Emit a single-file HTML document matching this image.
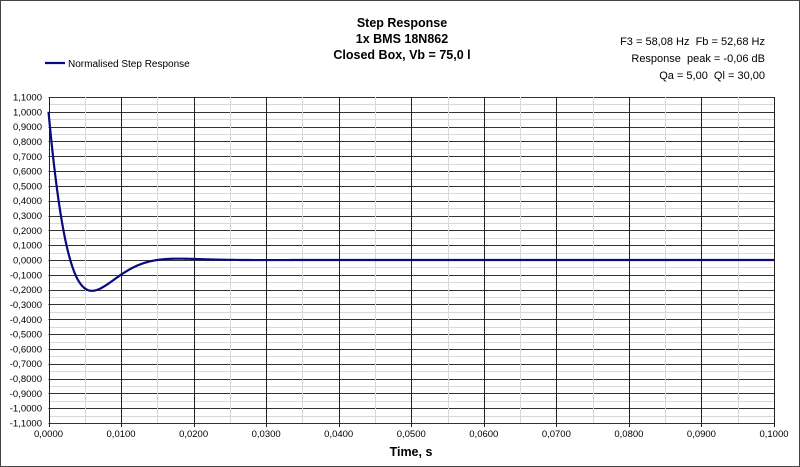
<!DOCTYPE html>
<html><head><meta charset="utf-8"><style>
html,body{margin:0;padding:0;background:#fff;}
svg{display:block;font-family:"Liberation Sans",Arial,sans-serif;}
text{white-space:pre;}
</style></head><body>
<svg id="s" width="800" height="467" viewBox="0 0 800 467" xmlns="http://www.w3.org/2000/svg" xml:space="preserve">
<rect x="0.5" y="0.5" width="799" height="466" fill="#fff" stroke="#444" stroke-width="1"/>
<g id="grid"></g>
<path id="curve" d="" fill="none" stroke="#0a0a80" stroke-width="2.2"/>
<g font-weight="bold" font-size="12.5" text-anchor="middle" fill="#000">
<text x="402" y="27">Step Response</text>
<text x="402" y="43">1x BMS 18N862</text>
<text x="402" y="59">Closed Box, Vb = 75,0 l</text>
<text x="411" y="456">Time, s</text>
</g>
<g font-size="11" text-anchor="end" fill="#000">
<text x="765" y="45">F3 = 58,08 Hz  Fb = 52,68 Hz</text>
<text x="765" y="62">Response  peak = -0,06 dB</text>
<text x="765" y="79">Qa = 5,00  Ql = 30,00</text>
</g>
<line x1="45" y1="63" x2="65" y2="63" stroke="#0a0a80" stroke-width="2.2"/>
<text x="68" y="67" font-size="10" fill="#000">Normalised Step Response</text>
<g id="labels" font-size="9.5" fill="#000"></g>
</svg>
<script>
var L=48.5,R=774,T=97,B=423,ns="http://www.w3.org/2000/svg";
var g=document.getElementById('grid'),lb=document.getElementById('labels');
function el(n,a,p){var e=document.createElementNS(ns,n);for(var k in a)e.setAttribute(k,a[k]);p.appendChild(e);return e;}
function Y(v){return T+(1.1-v)/2.2*(B-T);}
function X(t){return L+t/0.1*(R-L);}
for(var i=0;i<=44;i++){var v=1.1-i*0.05,y=Math.round(Y(v))+0.5;
 el('line',{x1:L,x2:R,y1:y,y2:y,stroke:i%2?'#d8d8d8':'#333','stroke-width':1},g);}
for(var i=0;i<=20;i++){var x=Math.round(X(i*0.005))+0.5;
 el('line',{x1:x,x2:x,y1:T,y2:B+(i%2?0:4),stroke:i%2?'#d8d8d8':'#222','stroke-width':1},g);}
for(var i=0;i<=22;i++){var v=1.1-i*0.1;var t=el('text',{x:42,y:Y(v)+3.5,'text-anchor':'end'},lb);
 t.textContent=(Math.abs(v)<1e-9?'0,0000':v.toFixed(4).replace('.',','));}
for(var i=0;i<=10;i++){var t=el('text',{x:X(i*0.01),y:437,'text-anchor':'middle'},lb);t.textContent=(i*0.01).toFixed(4).replace('.',',');}
var z=0.707,w0=2*Math.PI*59,wd=w0*Math.sqrt(1-z*z),d="";
for(var i=0;i<=800;i++){var t=i*0.1/800;var h=Math.exp(-z*w0*t)*(Math.cos(wd*t)-z/Math.sqrt(1-z*z)*Math.sin(wd*t));
 d+=(i?'L':'M')+X(t).toFixed(2)+' '+Y(h).toFixed(2);}
document.getElementById('curve').setAttribute('d',d);
</script>
</body></html>
